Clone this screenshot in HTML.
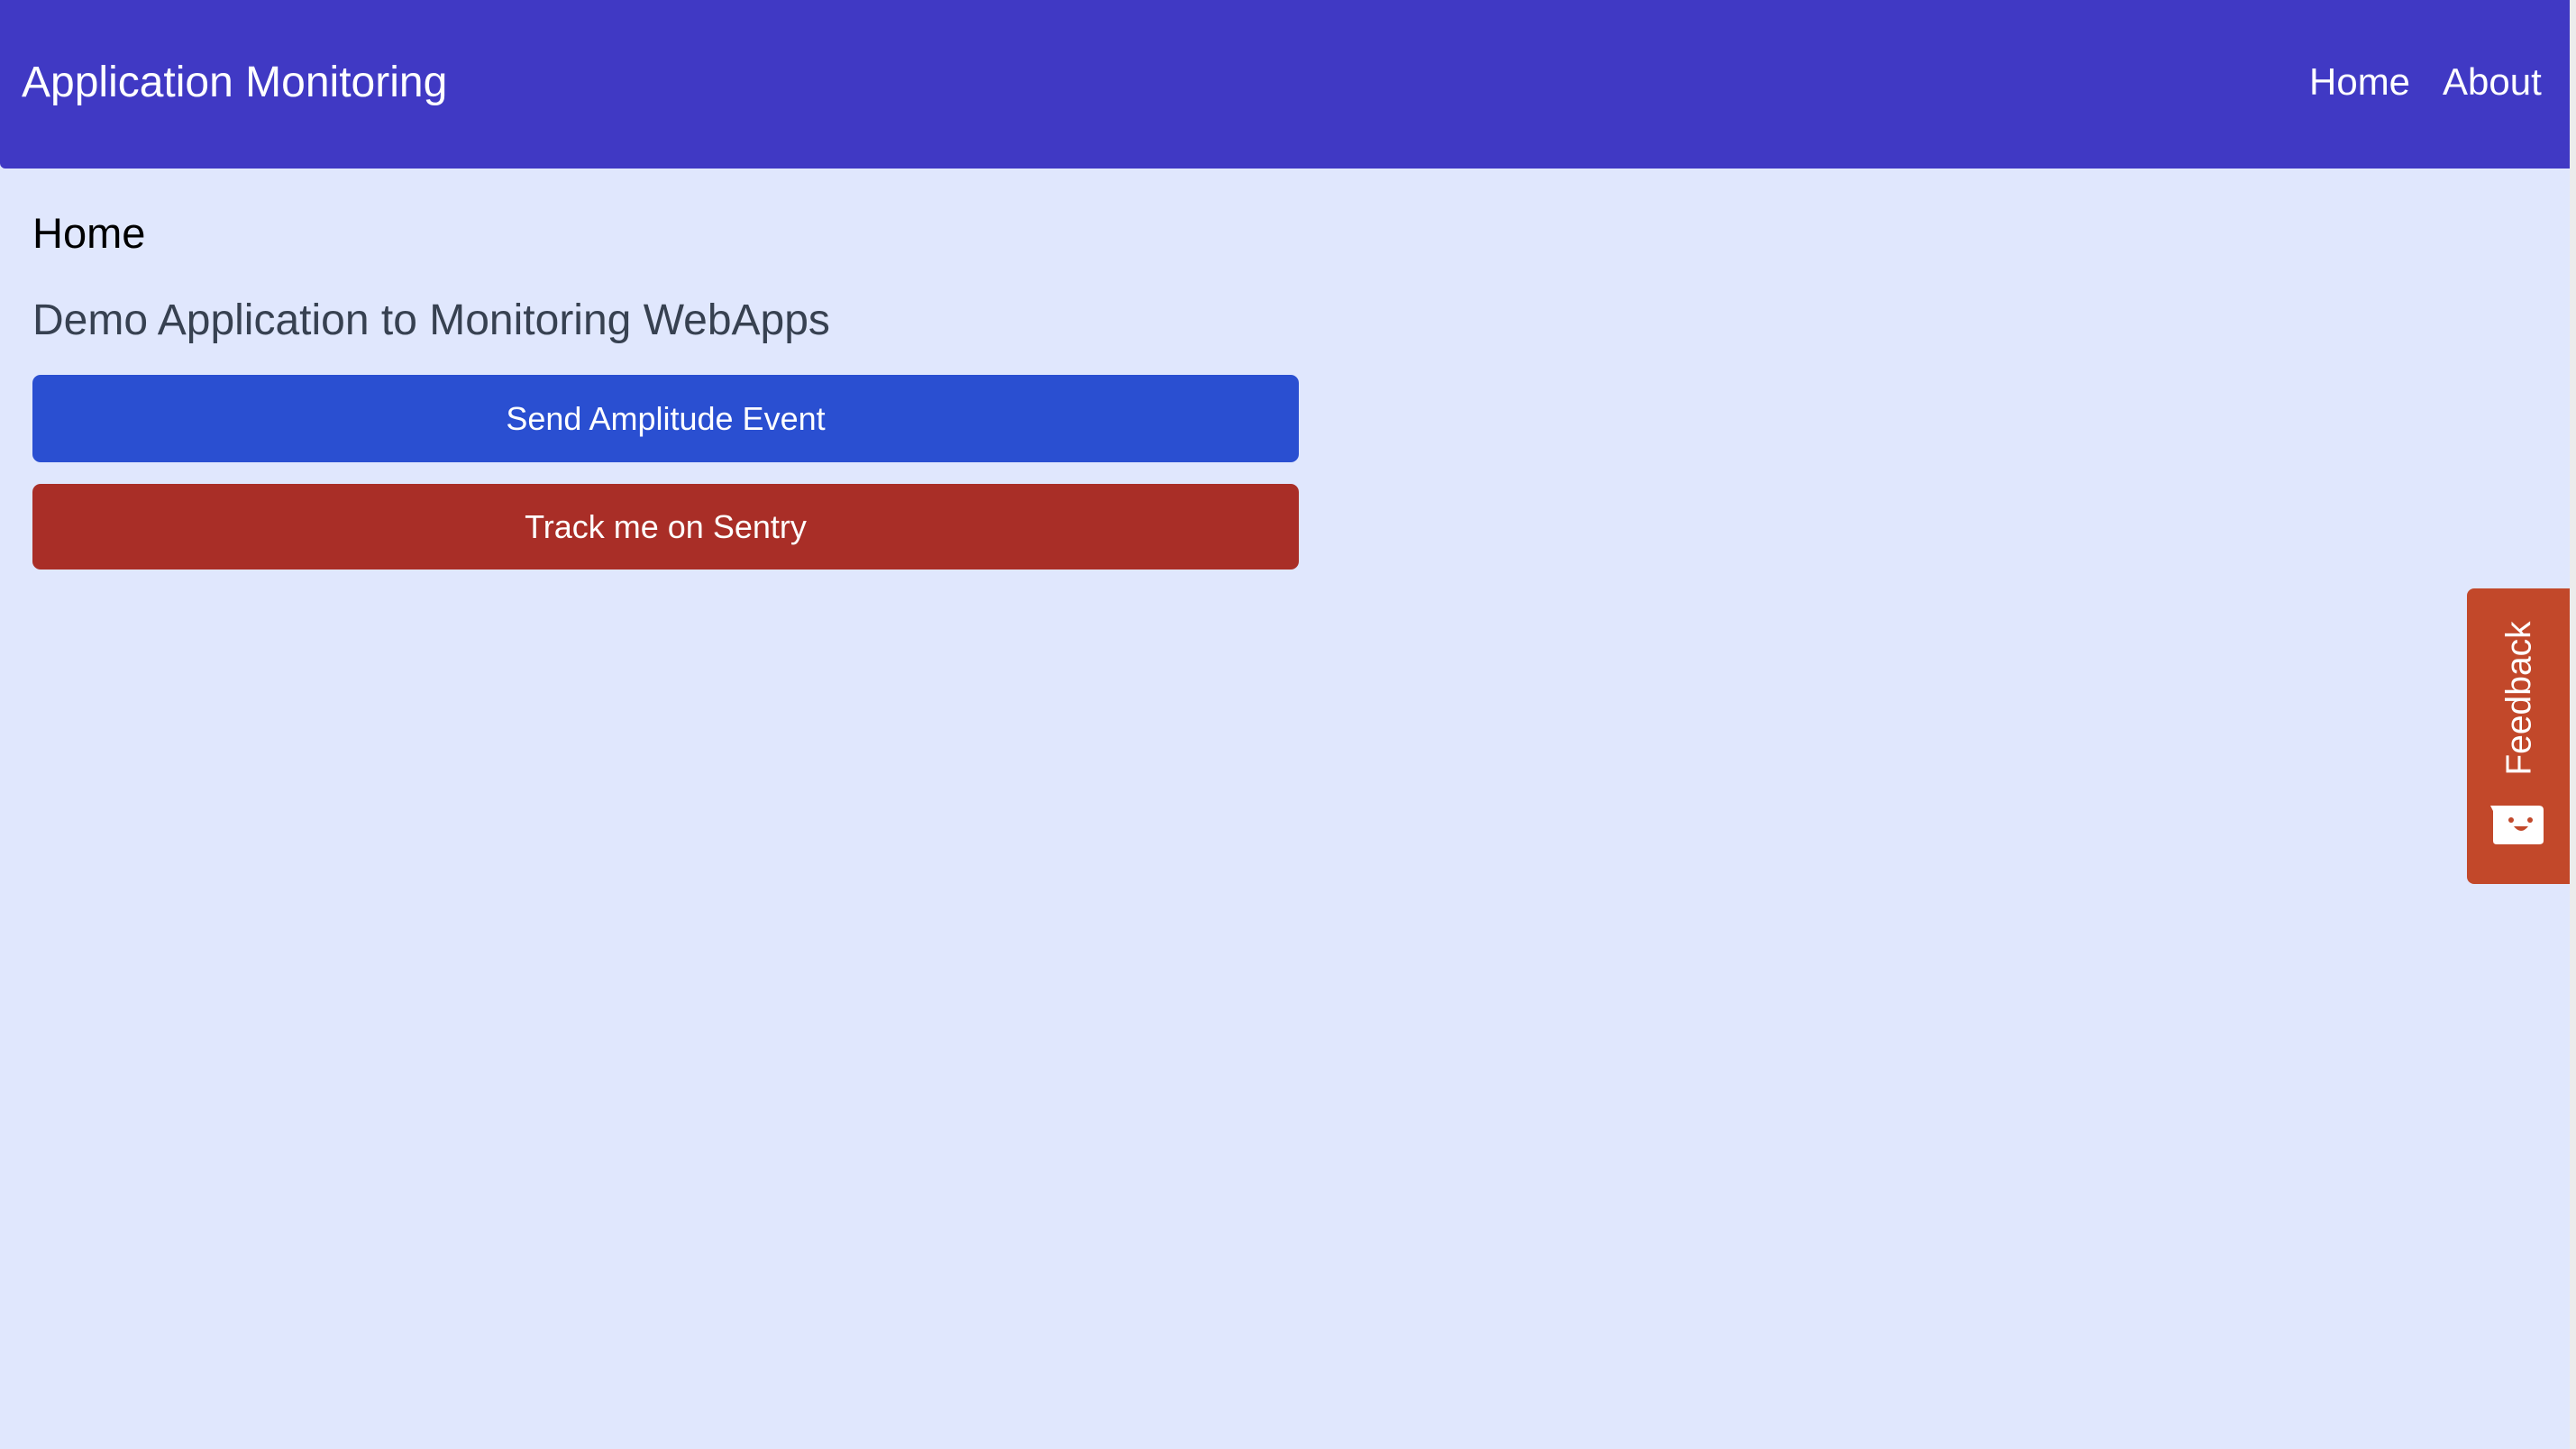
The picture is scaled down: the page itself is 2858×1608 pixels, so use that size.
<!DOCTYPE html>
<html><head><meta charset="utf-8"><style>
*{margin:0;padding:0;box-sizing:border-box}
html,body{width:2858px;height:1608px;overflow:hidden;background:#e0e7fd;font-family:"Liberation Sans",Arial,sans-serif}
.sb{position:absolute;left:2851px;top:0;width:7px;height:1608px;background:#ececec}
.hdr{position:absolute;left:0;top:0;width:2851px;height:187px;background:#4039c4;border-bottom-left-radius:6px}
.t{position:absolute;line-height:1;white-space:nowrap}
.btn{position:absolute;left:36px;width:1405px;border-radius:9px;color:#fff;font-size:36px;display:flex;align-items:center;justify-content:center}
.fb{position:absolute;left:2737px;top:653px;width:114px;height:328px;background:#c2482a;border-radius:8px 0 0 8px}
</style></head><body>
<div class="hdr"></div>
<div class="sb"></div>
<div class="t" style="left:24px;top:68px;font-size:48px;color:#fff">Application Monitoring</div>
<div class="t" style="left:2562px;top:70px;font-size:42px;color:#fff">Home</div>
<div class="t" style="left:2710px;top:70px;font-size:42px;color:#fff">About</div>
<div class="t" style="left:36px;top:235px;font-size:47px;color:#000">Home</div>
<div class="t" style="left:36px;top:332px;font-size:48px;color:#374151">Demo Application to Monitoring WebApps</div>
<div class="btn" style="top:416px;height:97px;background:#2a4fd1">Send Amplitude Event</div>
<div class="btn" style="top:537px;height:95px;background:#a92e27">Track me on Sentry</div>
<div class="fb">
<div class="t" style="left:58px;top:122px;font-size:39px;color:#fff;transform:translate(-50%,-50%) rotate(-90deg)">Feedback</div>
<svg style="position:absolute;left:20px;top:236px" width="70" height="52" viewBox="0 0 70 52">
<path d="M6 5 L60 5 Q65 5 65 10 L65 44 Q65 48 60 48 L13 48 Q9 48 9 44 L9 11 Z" fill="#fff"/>
<circle cx="29" cy="21" r="3" fill="#c2482a"/><circle cx="50" cy="21" r="3" fill="#c2482a"/>
<path d="M32 28 Q40 38 48 28 Z" fill="#c2482a"/>
</svg>
</div>
</body></html>
